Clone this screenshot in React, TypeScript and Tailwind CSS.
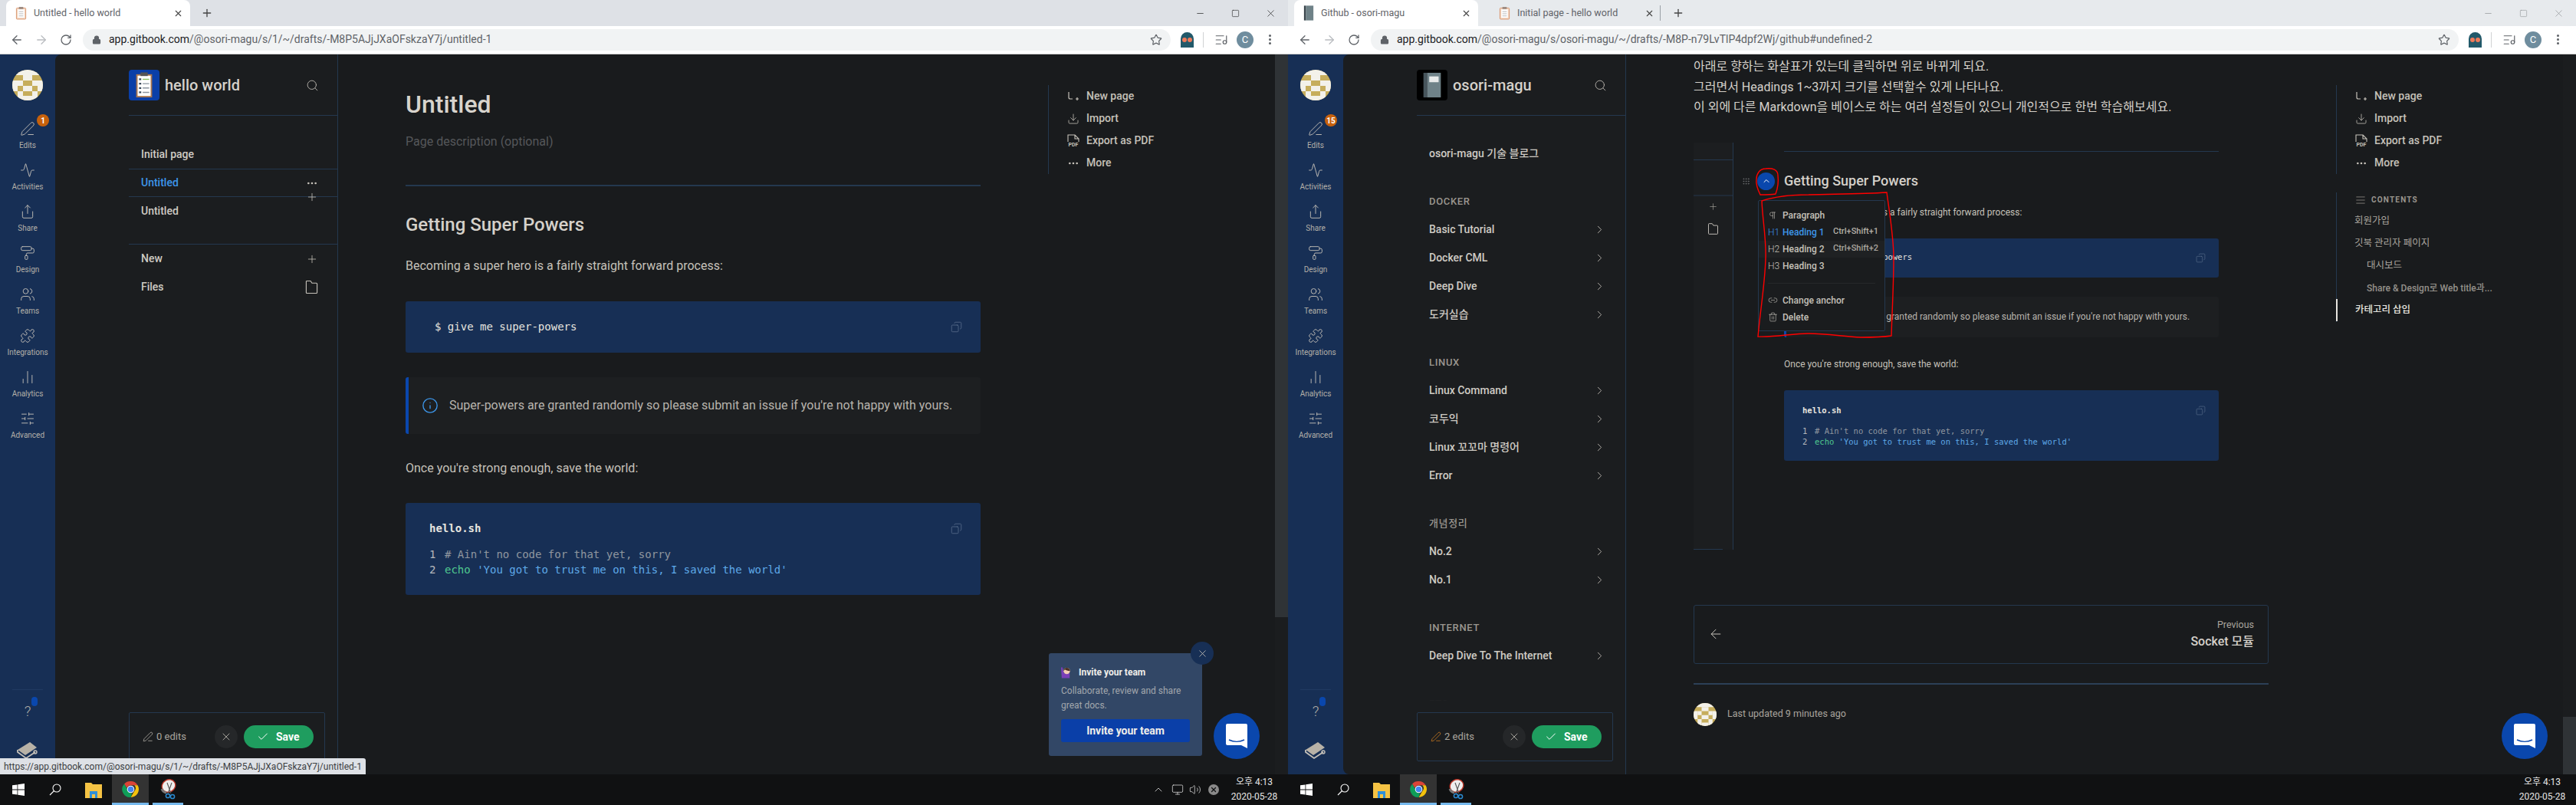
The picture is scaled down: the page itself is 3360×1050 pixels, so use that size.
import type { ReactNode } from "react";
import {
  Activity, ArrowLeft, ArrowRight, Check, ChevronRight, ChevronUp, Copy, Download, Ellipsis, EllipsisVertical, Grip, Info,
  Link2, ListMusic, Lock, Minus, Monitor, PaintRoller, PenLine, Pilcrow, Plus, Puzzle, RotateCw, Search, Share,
  SlidersHorizontal, Square, Star, Trash2, Users, ChartNoAxesColumn, AlignJustify, Volume2, X,
} from "lucide-react";

function Identicon({ size }: { size: string }) {
  return (
    <div className={`${size} shrink-0 rounded-full overflow-hidden`}>
      <svg viewBox="0 0 40 40" className="w-full h-full block">
        <rect width="40" height="40" fill="#c6ad5c" />
        <rect width="40" height="7" fill="#f3f1ea" />
        <rect x="0" y="14" width="7" height="14" fill="#f3f1ea" />
        <rect x="33" y="14" width="7" height="14" fill="#f3f1ea" />
        <rect x="14" y="7" width="12" height="7" fill="#f3f1ea" />
        <rect x="7" y="14" width="7" height="7" fill="#f3f1ea" />
        <rect x="26" y="14" width="7" height="7" fill="#f3f1ea" />
        <rect x="14" y="21" width="12" height="7" fill="#f3f1ea" />
        <rect x="7" y="28" width="7" height="12" fill="#f3f1ea" />
        <rect x="26" y="28" width="7" height="12" fill="#f3f1ea" />
        <rect x="14" y="34" width="12" height="6" fill="#f3f1ea" />
      </svg>
    </div>
  );
}

function ClipboardFavicon() {
  return (
    <svg viewBox="0 0 16 18" className="w-[15px] h-[18px] shrink-0">
      <rect x="1.5" y="2" width="13" height="15.5" rx="1" fill="#f3d9c5" stroke="#d9946c" />
      <rect x="3.5" y="4" width="9" height="11.5" fill="#fff" />
      <rect x="5" y="0.5" width="6" height="3" fill="#9c8a80" />
      <path d="M5 7h6M5 10h6M5 13h6" stroke="#b5b5b5" />
    </svg>
  );
}

function HelloLogo() {
  return (
    <div className="w-10 h-10 shrink-0 rounded-sm bg-[#0a3fa8] flex items-center justify-center">
      <svg viewBox="0 0 24 36" className="w-[24px] h-[34px]">
        <rect x="1" y="3" width="22" height="32" fill="#a8764f" />
        <rect x="3" y="5" width="18" height="28" fill="#fff" />
        <rect x="7" y="0.5" width="10" height="5" fill="#555" />
        <path d="M5 10h3M5 16h3M5 22h3M5 28h3" stroke="#3a4a5c" strokeWidth="2.4" />
        <path d="M10 10h9" stroke="#8cc060" strokeWidth="1.5" />
        <path d="M10 16h9M10 22h9M10 28h9" stroke="#8a949e" strokeWidth="1.5" />
      </svg>
    </div>
  );
}

function BookLogo() {
  return (
    <div className="w-10 h-10 shrink-0 rounded-sm bg-black flex items-center justify-center">
      <svg viewBox="0 0 24 36" className="w-[24px] h-[34px]">
        <rect x="0" y="1" width="5" height="34" fill="#47555c" />
        <rect x="5" y="1" width="19" height="34" fill="#6f8288" />
        <rect x="8" y="6" width="13" height="8" fill="#e8eaea" />
      </svg>
    </div>
  );
}

function PageBookIcon() {
  return (
    <svg viewBox="0 0 16 22" className="w-[14px] h-[20px] shrink-0">
      <rect x="1" y="0" width="3" height="22" fill="#39454c" />
      <rect x="4" y="0" width="11" height="22" fill="#6f8288" />
    </svg>
  );
}

function FolderOutline() {
  return (
    <svg viewBox="0 0 18 20" fill="none" stroke="#c5c1b9" strokeWidth="1.2" className="w-[17px] h-[19px]">
      <path d="M1.5 2.5a1 1 0 0 1 1-1h5l2 3h6a1 1 0 0 1 1 1v12a1 1 0 0 1-1 1h-13a1 1 0 0 1-1-1z" />
    </svg>
  );
}

function TabStrip({ second, unfocused }: { second?: boolean; unfocused?: boolean }) {
  return (
    <div className={`h-[34px] flex items-end pl-2 text-[12.5px] ${unfocused ? "bg-[#e7eaed]" : "bg-[#dee1e6]"}`}>
      <div className="w-[240px] h-[34px] bg-white rounded-t-lg flex items-center pl-3 text-[#5f6368] shrink-0">
        {second ? <PageBookIcon /> : <ClipboardFavicon />}
        <span className="ml-[9px] flex-1">{second ? "Github - osori-magu" : "Untitled - hello world"}</span>
        <X size={13} strokeWidth={2} className="mr-[9px] text-[#444]" />
      </div>
      {second && (
        <div className="w-[238px] h-[34px] flex items-center pl-[27px] text-[#5f6368] shrink-0">
          <ClipboardFavicon />
          <span className="ml-[9px] flex-1">Initial page - hello world</span>
          <X size={13} strokeWidth={2} className="mr-[7px] text-[#444]" />
          <div className="w-px h-[20px] bg-[#9aa0a6]" />
        </div>
      )}
      <div className={`h-[34px] flex items-center ${second ? "ml-[15px]" : "ml-[14px]"}`}>
        <Plus size={16} strokeWidth={2} className="text-[#444]" />
      </div>
      <div className="flex-1" />
      <div className={`h-[34px] flex items-center ${unfocused ? "text-[#8a8d90]" : "text-[#111]"}`}>
        <div className="w-[46px] flex justify-center"><Minus size={13} strokeWidth={1.2} /></div>
        <div className="w-[46px] flex justify-center"><Square size={11} strokeWidth={1.2} /></div>
        <div className="w-[46px] flex justify-center"><X size={15} strokeWidth={1} /></div>
      </div>
    </div>
  );
}

function ToolBar({ url }: { url: string }) {
  return (
    <div className="h-[37px] bg-white border-b border-[#d0d0d0] flex items-center pl-[6px] pb-px">
      <div className="w-8 flex justify-center"><ArrowLeft size={18} strokeWidth={1.7} className="text-[#5f6368]" /></div>
      <div className="w-8 flex justify-center"><ArrowRight size={18} strokeWidth={1.7} className="text-[#b9bcc0]" /></div>
      <div className="w-8 flex justify-center"><RotateCw size={16} strokeWidth={1.9} className="text-[#5f6368]" /></div>
      <div className="ml-[6px] w-[1419px] h-[28px] rounded-full bg-[#f1f3f4] flex items-center pl-[12px] text-[14px] text-[#202124]">
        <Lock size={12} strokeWidth={2.4} className="text-[#5f6368] fill-[#5f6368]" />
        <span className="ml-[10px] flex-1 text-[#5f6368]">
          <span className="text-[#202124]">app.gitbook.com</span>
          {url}
        </span>
        <Star size={16} strokeWidth={1.8} className="mr-[11px] text-[#5f6368]" />
      </div>
      <div className="ml-[13px] w-[17px] h-[20px] rounded-t-full bg-[#22596a] flex items-center justify-center gap-px">
        <div className="w-[6px] h-[6px] rounded-full bg-[#ee7a5a]" />
        <div className="w-[6px] h-[6px] rounded-full bg-[#ee7a5a]" />
      </div>
      <div className="ml-[12px] w-px h-[20px] bg-[#d0d2d4]" />
      <ListMusic size={18} strokeWidth={1.6} className="ml-[14px] text-[#5f6368]" />
      <div className="ml-[11px] w-[22px] h-[22px] rounded-full bg-[#6f8d9e] flex items-center justify-center text-white text-[13px]">C</div>
      <EllipsisVertical size={17} strokeWidth={2.4} className="ml-[13px] text-[#5f6368]" />
    </div>
  );
}

function NavItem({ icon, label, badge }: { icon: ReactNode; label: string; badge?: string }) {
  return (
    <div className="relative h-[54px] flex flex-col items-center pt-[3px] text-[#c5c1b9]">
      <div className="h-[28px] flex items-center">{icon}</div>
      <div className="mt-[1px] text-[10px] leading-[14px] whitespace-nowrap text-[#b4b0a8]">{label}</div>
      {badge && (
        <div className="absolute left-[48px] -top-[2px] w-[16px] h-[16px] rounded-full bg-[#c7610c] text-white text-[10px] font-bold flex items-center justify-center">
          {badge}
        </div>
      )}
    </div>
  );
}

function IconRail({ badge }: { badge: string }) {
  const i = { size: 20, strokeWidth: 1.1 };
  return (
    <div className="relative w-[72px] shrink-0 bg-[#172f55] flex flex-col">
      <div className="pt-[20px] pb-[20px] pl-[16px]"><Identicon size="w-10 h-10" /></div>
      <NavItem icon={<PenLine {...i} />} label="Edits" badge={badge} />
      <NavItem icon={<Activity {...i} />} label="Activities" />
      <NavItem icon={<Share {...i} />} label="Share" />
      <NavItem icon={<PaintRoller {...i} />} label="Design" />
      <NavItem icon={<Users {...i} />} label="Teams" />
      <NavItem icon={<Puzzle {...i} />} label="Integrations" />
      <NavItem icon={<ChartNoAxesColumn {...i} />} label="Analytics" />
      <NavItem icon={<SlidersHorizontal {...i} />} label="Advanced" />
      <div className="mt-auto mx-4 border-t border-[#203a61]" />
      <div className="relative mt-[8px] h-[50px] flex items-center justify-center text-[#b4b0a8] text-[19px] font-light pb-[10px]">
        ?
        <div className="absolute left-[41px] top-[1px] w-[8px] h-[12px] rounded-full bg-[#0a47ad]" />
      </div>
      <div className="h-[52px] flex justify-center pt-[4px]">
        <svg viewBox="0 0 32 32" className="w-[32px] h-[32px]">
          <path d="M3 16 19 6l9 7-15 10z" fill="#b8b2a7" />
          <path d="M3 16v3l11 8 12-8" fill="none" stroke="#c5c1b9" strokeWidth="1.8" />
          <circle cx="26" cy="19" r="2" fill="none" stroke="#c5c1b9" strokeWidth="1.4" />
        </svg>
      </div>
    </div>
  );
}

function SaveBox({ edits, active }: { edits: string; active?: boolean }) {
  return (
    <div className="absolute left-[96px] bottom-[17px] w-[256px] h-[64px] bg-[#1b1d1f] border border-[#24384f] rounded-[2px] flex items-center pl-[17px]">
      <PenLine size={14} strokeWidth={1.2} className={active ? "text-[#e2861f]" : "text-[#c5c1b9]"} />
      <span className="ml-[4px] w-[76px] text-[13px] text-[#a9a59e]">{edits}</span>
      <div className="w-[30px] h-[30px] rounded-full bg-[#252729] flex items-center justify-center">
        <X size={16} strokeWidth={1.2} className="text-[#c5c1b9]" />
      </div>
      <div className="ml-[8px] w-[91px] h-[30px] rounded-full bg-[#1f9d5f] flex items-center pl-[17px] text-white text-[14px] font-bold">
        <Check size={16} strokeWidth={1.5} />
        <span className="ml-[9px]">Save</span>
      </div>
    </div>
  );
}

function Row({ children, icon }: { children: ReactNode; icon?: ReactNode }) {
  return (
    <div className="h-[37px] flex items-center justify-between pl-[16px] pr-[25px] text-[14px] font-medium text-[#cfcbc4]">
      <span>{children}</span>
      {icon}
    </div>
  );
}

function SectionTitle({ children }: { children: ReactNode }) {
  return (
    <div className="mt-[25px] h-[37px] flex items-center pl-[16px] text-[13px] font-medium tracking-[0.05em] text-[#9a968f]">
      {children}
    </div>
  );
}

function Chevron() {
  return <ChevronRight size={17} strokeWidth={1.2} className="text-[#c5c1b9]" />;
}

function SpaceHeader({ logo, title }: { logo: ReactNode; title: string }) {
  return (
    <div className="h-[80px] border-b border-[#24384f] flex items-start pt-[20px]">
      {logo}
      <div className="ml-[7px] h-10 flex-1 flex items-center text-[20px] font-medium text-[#d5d1ca]">{title}</div>
      <div className="h-10 flex items-center pr-[24px]"><Search size={17} strokeWidth={1.2} className="text-[#c5c1b9]" /></div>
    </div>
  );
}

function HelloSidebar() {
  return (
    <div className="relative w-[369px] shrink-0 bg-[#1b1d1f] rounded-l-lg border-r border-[#24384f] pl-[96px]">
      <SpaceHeader logo={<HelloLogo />} title="hello world" />
      <div className="pt-[32px]">
        <Row>Initial page</Row>
        <div className="relative h-[37px] border-y border-[#24384f] flex items-center justify-between pl-[16px] pr-[25px] text-[14px] font-medium text-[#3d96ea]">
          <span>Untitled</span>
          <Ellipsis size={16} strokeWidth={2} className="text-[#c5c1b9]" />
          <Plus size={16} strokeWidth={1.2} className="absolute right-[25px] -bottom-[9px] text-[#c5c1b9]" />
        </div>
        <Row>Untitled</Row>
        <div className="mt-[24px] mb-0 border-t border-[#24384f]" />
        <Row icon={<Plus size={16} strokeWidth={1.2} className="text-[#c5c1b9]" />}>New</Row>
        <Row icon={<FolderOutline />}>Files</Row>
      </div>
      <SaveBox edits="0 edits" />
    </div>
  );
}

function OsoriSidebar() {
  const pages: [string, string[]][] = [
    ["DOCKER", ["Basic Tutorial", "Docker CML", "Deep Dive", "도커실습"]],
    ["LINUX", ["Linux Command", "코두익", "Linux 꼬꼬마 명령어", "Error"]],
    ["개념정리", ["No.2", "No.1"]],
    ["INTERNET", ["Deep Dive To The Internet"]],
  ];
  return (
    <div className="relative w-[369px] shrink-0 bg-[#1b1d1f] rounded-l-lg border-r border-[#24384f] pl-[96px] overflow-hidden">
      <SpaceHeader logo={<BookLogo />} title="osori-magu" />
      <div className="pt-[31px]">
        <Row>osori-magu 기술 블로그</Row>
        {pages.map(([title, rows]) => (
          <div key={title}>
            <SectionTitle>{title}</SectionTitle>
            {rows.map((r) => (
              <Row key={r} icon={<Chevron />}>{r}</Row>
            ))}
          </div>
        ))}
        <SectionTitle>ETC</SectionTitle>
      </div>
      <div className="absolute left-[96px] bottom-[96px] w-[256px] h-[14px] bg-gradient-to-b from-transparent to-[#1b1d1f]" />
      <div className="absolute left-[96px] bottom-0 w-[256px] h-[96px] bg-[#1b1d1f]" />
      <SaveBox edits="2 edits" active />
    </div>
  );
}

function CodeLines({ small }: { small?: boolean }) {
  return (
    <div className={small ? "mt-[12px] text-[10.5px] leading-[14.5px]" : "mt-[14px] text-[14px] leading-[20px]"}>
      <div className="flex text-[#8f969f]">
        <span className={small ? "w-[16px] text-[#b5b8bc]" : "w-[20px] text-[#b5b8bc]"}>1</span>
        <span># Ain't no code for that yet, sorry</span>
      </div>
      <div className="flex">
        <span className={small ? "w-[16px] text-[#b5b8bc]" : "w-[20px] text-[#b5b8bc]"}>2</span>
        <span className="text-[#4fc88f]">echo</span>
        <span className="text-[#5ea9e8] whitespace-pre"> 'You got to trust me on this, I saved the world'</span>
      </div>
    </div>
  );
}

function ActionRow({ icon, label }: { icon: ReactNode; label: string }) {
  return (
    <div className="h-[29px] flex items-center text-[14px] font-medium text-[#c5c1b9]">
      <div className="w-[49px] pl-[24px]">{icon}</div>
      {label}
    </div>
  );
}

function PageActions() {
  return (
    <div className="border-l border-[#24384f] h-[116px]">
      <ActionRow
        label="New page"
        icon={
          <svg viewBox="0 0 16 16" fill="none" stroke="#c5c1b9" strokeWidth="1.2" className="w-[16px] h-[16px]">
            <path d="M2 2v7a2 2 0 0 0 2 2h3M11 11h4M13 9v4" />
          </svg>
        }
      />
      <ActionRow label="Import" icon={<Download size={16} strokeWidth={1.2} />} />
      <ActionRow
        label="Export as PDF"
        icon={
          <div className="w-[16px] flex flex-col items-center">
            <svg viewBox="0 0 16 10" fill="none" stroke="#c5c1b9" strokeWidth="1.1" className="w-[16px] h-[10px]">
              <path d="M1 10V1h9l5 5v4M10 1v5h5" />
            </svg>
            <span className="text-[7px] leading-[8px] font-bold">PDF</span>
          </div>
        }
      />
      <ActionRow label="More" icon={<Ellipsis size={16} strokeWidth={2} />} />
    </div>
  );
}

function ScrollBar({ thumb }: { thumb: string }) {
  return (
    <div className="w-[17px] shrink-0 bg-[#1b1d1f] flex flex-col">
      <div className={thumb} />
    </div>
  );
}

function HelloMain() {
  return (
    <div className="flex-1 flex pl-[88px]">
      <div className="w-[750px]">
        <div className="mt-[45px] h-10 text-[32px] leading-[40px] font-medium text-[#d8d4cd]">Untitled</div>
        <div className="mt-[17px] h-6 text-[16px] leading-[24px] text-[#55575a]">Page description (optional)</div>
        <div className="mt-[44px] h-[2px] bg-[#24384f]" />
        <div className="mt-[34px] h-8 text-[24px] leading-[32px] font-medium text-[#d5d1ca]">Getting Super Powers</div>
        <div className="mt-[26px] h-6 text-[16px] leading-[24px] text-[#c5c1b9]">Becoming a super hero is a fairly straight forward process:</div>
        <div className="mt-[34px] h-[67px] bg-[#172f55] rounded-[3px] flex items-center justify-between pl-[38px] pr-[24px] font-['DejaVu_Sans_Mono',monospace] text-[14px] text-[#e6e4df]">
          <span>$ give me super-powers</span>
          <Copy size={15} strokeWidth={1.2} className="text-[#5f7390] -scale-x-100" />
        </div>
        <div className="mt-[32px] h-[74px] bg-[#1d1f21] rounded-[3px] border-l-4 border-[#0a47ad] flex items-center pl-[17px] text-[16px] text-[#b8b4ad]">
          <Info size={22} strokeWidth={1.5} className="text-[#3d96ea]" />
          <span className="ml-[14px]">Super-powers are granted randomly so please submit an issue if you're not happy with yours.</span>
        </div>
        <div className="mt-[33px] h-6 text-[16px] leading-[24px] text-[#c5c1b9]">Once you're strong enough, save the world:</div>
        <div className="relative mt-[33px] h-[120px] bg-[#172f55] rounded-[3px] pt-[23px] pl-[31px] font-['DejaVu_Sans_Mono',monospace]">
          <div className="text-[14px] leading-[20px] font-bold text-[#e6e4df]">hello.sh</div>
          <CodeLines />
          <Copy size={15} strokeWidth={1.2} className="absolute right-[24px] top-[26px] text-[#5f7390] -scale-x-100" />
        </div>
      </div>
      <div className="ml-[88px] mt-[40px] flex-1"><PageActions /></div>
    </div>
  );
}

function PopupItem({ icon, label, keys, blue, hover }: { icon: ReactNode; label: string; keys?: string; blue?: boolean; hover?: boolean }) {
  return (
    <div className={`h-[22px] flex items-center pl-[12px] whitespace-nowrap text-[12px] font-medium ${hover ? "bg-[#1f2123]" : ""} ${blue ? "text-[#3d96ea]" : "text-[#c5c1b9]"}`}>
      <div className="w-[19px] text-[12px] font-light">{icon}</div>
      <span className="w-[66px]">{label}</span>
      <span className={`text-[11px] ${blue ? "text-[#b4b0a8]" : "text-[#a9a59e]"}`}>{keys}</span>
    </div>
  );
}

function EmbeddedShot() {
  return (
    <div className="relative mt-[32px] h-[531px] flex">
      <div className="w-[52px] bg-[#1c1e20] border-r border-[#24384f] relative">
        <div className="mt-[22px] border-t border-[#24384f]" />
        <div className="mt-[45px] border-t-2 border-[#202a36]" />
        <div className="mt-[7px] flex justify-center"><Plus size={13} strokeWidth={1.2} className="text-[#a9a59e]" /></div>
        <div className="mt-[13px] flex justify-center scale-[0.85]"><FolderOutline /></div>
        <div className="absolute left-0 bottom-0 w-[38px] border-b border-[#24384f]" />
      </div>
      <div className="w-[567px] ml-[66px]">
        <div className="mt-[11px] h-px bg-[#24384f]" />
        <div className="mt-[26px] h-6 text-[18px] leading-[24px] font-medium text-[#d5d1ca]">Getting Super Powers</div>
        <div className="mt-[19px] h-5 text-[12px] leading-[20px] text-[#c5c1b9]">Becoming a super hero is a fairly straight forward process:</div>
        <div className="mt-[24px] h-[51px] bg-[#172f55] rounded-[3px] flex items-center justify-between pl-[28px] pr-[17px] font-['DejaVu_Sans_Mono',monospace] text-[10.5px] text-[#e6e4df]">
          <span>$ give me super-powers</span>
          <Copy size={13} strokeWidth={1.1} className="text-[#5f7390] -scale-x-100" />
        </div>
        <div className="mt-[25px] h-[53px] bg-[#1d1f21] rounded-[3px] border-l-[3px] border-[#0a47ad] flex items-center pl-[34px] text-[12px] text-[#b8b4ad]">
          Super-powers are granted randomly so please submit an issue if you're not happy with yours.
        </div>
        <div className="mt-[25px] h-5 text-[12px] leading-[20px] text-[#c5c1b9]">Once you're strong enough, save the world:</div>
        <div className="mt-[24px] h-[92px] bg-[#172f55] rounded-[3px] pt-[18px] pl-[24px] font-['DejaVu_Sans_Mono',monospace] relative">
          <div className="text-[10.5px] leading-[16px] font-bold text-[#e6e4df]">hello.sh</div>
          <CodeLines small />
          <Copy size={13} strokeWidth={1.1} className="absolute right-[17px] top-[20px] text-[#5f7390] -scale-x-100" />
        </div>
      </div>

      <Grip size={11} strokeWidth={1.5} className="absolute left-[63px] top-[45px] text-[#77797c]" />
      <div className="absolute left-[83px] top-[39px] w-[23px] h-[23px] rounded-full bg-[#0a47ad] flex items-center justify-center">
        <ChevronUp size={12} strokeWidth={2} className="text-white" />
      </div>

      <div className="absolute left-[84px] top-[75px] w-[166px] h-[171px] bg-[#1a1c1e] border border-[#24384f] rounded-[2px] pt-[8px]">
        <PopupItem icon={<Pilcrow size={12} strokeWidth={1.2} />} label="Paragraph" />
        <PopupItem icon="H1" label="Heading 1" keys="Ctrl+Shift+1" blue />
        <PopupItem icon="H2" label="Heading 2" keys="Ctrl+Shift+2" hover />
        <PopupItem icon="H3" label="Heading 3" />
        <div className="mt-[11px] mb-[11px] mx-[12px] border-t border-[#25272a]" />
        <PopupItem icon={<Link2 size={13} strokeWidth={1.2} />} label="Change anchor" />
        <PopupItem icon={<Trash2 size={13} strokeWidth={1.2} />} label="Delete" />
      </div>

      <svg viewBox="0 0 300 270" fill="none" stroke="#ff0000" strokeWidth="1.4" className="absolute left-0 top-0 w-[300px] h-[270px] pointer-events-none">
        <path d="M94 34c9-1 16 1 16 9 1 8 0 16-3 24-6 1-14 1-20 1-3-6-6-13-5-20 0-7 4-14 12-14z" />
        <path d="M89 76c18-6 40-8 61-8 34-1 70-1 102-3 4 30 9 58 9 86 0 34-2 68-3 101-14 2-26 2-40 2-22-1-44-5-68-5-22 0-43 5-66 4 3-34 9-68 10-102 1-25-4-50-5-75z" />
      </svg>
    </div>
  );
}

function OsoriMain() {
  return (
    <div className="flex-1 flex pl-[88px]">
      <div className="w-[750px]">
        <div className="pt-[3px] text-[16px] leading-[26.5px] text-[#d5d1ca]">
          <div>아래로 향하는 화살표가 있는데 클릭하면 위로 바뀌게 되요.</div>
          <div>그러면서 Headings 1~3까지 크기를 선택할수 있게 나타나요.</div>
          <div>이 외에 다른 Markdown을 베이스로 하는 여러 설정들이 있으니 개인적으로 한번 학습해보세요.</div>
        </div>
        <EmbeddedShot />
        <div className="mt-[72px] h-[77px] border border-[#24384f] rounded-[3px] flex items-center justify-between pl-[18px] pr-[18px]">
          <ArrowLeft size={20} strokeWidth={1.2} className="text-[#c5c1b9]" />
          <div className="text-right">
            <div className="text-[12.5px] leading-[20px] text-[#a9a59e]">Previous</div>
            <div className="text-[16px] leading-[24px] font-medium text-[#d5d1ca]">Socket 모듈</div>
          </div>
        </div>
        <div className="mt-[25px] h-[2px] bg-[#2c4057]" />
        <div className="mt-[24px] flex items-center">
          <Identicon size="w-[30px] h-[30px]" />
          <span className="ml-[14px] text-[12.5px] text-[#a9a59e]">Last updated 9 minutes ago</span>
        </div>
      </div>
      <div className="ml-[88px] mt-[40px] flex-1">
        <PageActions />
        <div className="mt-[24px] relative border-l border-[#24384f] h-[169px] text-[14px] text-[#a9a59e]">
          <div className="h-[19px] flex items-center pl-[24px] text-[10px] font-bold tracking-[0.12em] text-[#99958e]">
            <AlignJustify size={14} strokeWidth={1.3} className="mr-[7px]" />
            CONTENTS
          </div>
          <div className="h-[29px] mt-[4px] flex items-center pl-[23px] text-[12.5px]">회원가입</div>
          <div className="h-[29px] flex items-center pl-[23px] text-[12.5px]">깃북 관리자 페이지</div>
          <div className="h-[29px] flex items-center pl-[39px] text-[12.5px]">대시보드</div>
          <div className="h-[29px] flex items-center pl-[39px] text-[12px] font-medium text-[#94908a]">Share &amp; Design로 Web title과...</div>
          <div className="h-[29px] flex items-center pl-[23px] text-[12.5px] font-medium text-[#e6e4df] border-l-[2px] -ml-px border-[#e6e4df]">카테고리 삽입</div>
        </div>
      </div>
    </div>
  );
}

function ChatBubble() {
  return (
    <div className="absolute left-[1583px] top-[859px] w-[60px] h-[60px] rounded-full bg-[#0a47ad] flex items-center justify-center">
      <svg viewBox="0 0 28 32" className="w-[28px] h-[32px]">
        <path d="M2 0h24a2 2 0 0 1 2 2v30l-8-4H2a2 2 0 0 1-2-2V2a2 2 0 0 1 2-2z" fill="#fff" />
        <path d="M4 21c6 3 14 3 20 0" fill="none" stroke="#0a47ad" strokeWidth="1.6" />
      </svg>
    </div>
  );
}

function InviteCard() {
  return (
    <div className="absolute left-[1368px] top-[781px] w-[200px] h-[134px] bg-[#324766] rounded-[3px] px-[16px] pt-[15px]">
      <div className="flex items-center h-[20px]">
        <svg viewBox="0 0 16 16" className="w-[15px] h-[16px] -ml-[1px]">
          <path d="M1 1h2l2 8h8v7H2z" fill="#7a3fb8" />
          <circle cx="9" cy="6" r="4.5" fill="#f3cdb5" />
          <path d="M4.5 6a4.5 4.5 0 0 1 9 0c-3 0-6-1-7-2z" fill="#4a3226" />
        </svg>
        <span className="ml-[9px] text-[12px] font-bold text-[#f0eeea]">Invite your team</span>
      </div>
      <div className="mt-[5px] text-[12px] leading-[19px] text-[#a3a7ad]">Collaborate, review and share great docs.</div>
      <div className="mt-[8px] h-[30px] rounded-[3px] bg-[#0a3fa8] flex items-center justify-center text-[14px] font-bold text-[#f0eeea]">
        Invite your team
      </div>
      <div className="absolute -right-[15px] -top-[15px] w-[30px] h-[30px] rounded-full bg-[#172f55] flex items-center justify-center">
        <X size={15} strokeWidth={1.3} className="text-[#c5c1b9]" />
      </div>
    </div>
  );
}

function TaskBar({ tray }: { tray?: boolean }) {
  return (
    <div className="h-[40px] bg-[#101112] flex text-white shrink-0">
      <div className="w-[48px] flex items-center justify-center">
        <svg viewBox="0 0 16 16" className="w-[16px] h-[16px]" fill="#fff">
          <path d="M0 2.3 6.5 1.4v6.2H0zM7.3 1.3 16 0v7.6H7.3zM0 8.4h6.5v6.2L0 13.7zM7.3 8.4H16V16l-8.7-1.3z" />
        </svg>
      </div>
      <div className="w-[48px] flex items-center justify-center">
        <svg viewBox="0 0 16 16" fill="none" stroke="#fff" strokeWidth="1.1" className="w-[16px] h-[16px]">
          <circle cx="10" cy="6" r="5" />
          <path d="M6.5 9.5 1 15" />
        </svg>
      </div>
      <div className="ml-[2px] w-[48px] flex items-center justify-center">
        <svg viewBox="0 0 22 22" className="w-[22px] h-[22px]">
          <path d="M0 2h8l2 2h12v18H0z" fill="#f5c344" />
          <rect x="6" y="13" width="10" height="9" fill="#2f8fd8" />
          <rect x="9" y="17" width="4" height="5" fill="#f5c344" />
        </svg>
      </div>
      <div className="w-[48px] bg-[#333333] border-b-[3px] border-[#76b9ed] flex items-center justify-center">
        <svg viewBox="0 0 24 24" className="w-[23px] h-[23px] mt-[2px]">
          <path d="M12 1a11 11 0 0 1 9.5 5.5H12a5.5 5.5 0 0 0-5.2 3.7L3.2 4.6A11 11 0 0 1 12 1z" fill="#db4437" />
          <path d="M21.5 6.5A11 11 0 0 1 12 23l4.8-8.2a5.5 5.5 0 0 0 .2-8.3z" fill="#f4c20d" />
          <path d="M12 23A11 11 0 0 1 3.2 4.6l4.7 8.2a5.5 5.5 0 0 0 5.9 4.4z" fill="#0f9d58" />
          <circle cx="12" cy="12" r="5" fill="#fff" />
          <circle cx="12" cy="12" r="4" fill="#4285f4" />
        </svg>
      </div>
      <div className="ml-[5px] w-[40px] border-b-[3px] border-[#76b9ed] flex items-center justify-center">
        <svg viewBox="0 0 26 28" className="w-[26px] h-[28px]">
          <ellipse cx="14" cy="10" rx="9" ry="8" transform="rotate(-30 14 10)" fill="#eee" stroke="#c0392b" strokeWidth="1.4" />
          <path d="M5 14a8 8 0 0 0 6 5" stroke="#777" strokeWidth="3" fill="none" />
          <path d="M12 6l5 14M18 6l-5 14" stroke="#555" strokeWidth="1.1" />
          <circle cx="13" cy="23" r="2.6" fill="none" stroke="#2b8ad0" strokeWidth="1.5" />
          <circle cx="19" cy="24" r="2.6" fill="none" stroke="#2b8ad0" strokeWidth="1.5" />
        </svg>
      </div>
      <div className="flex-1" />
      {tray && (
        <div className="flex items-center text-[#e6e6e6]">
          <ChevronUp size={16} strokeWidth={1.2} />
          <Monitor size={16} strokeWidth={1.1} className="ml-[9px]" />
          <Volume2 size={16} strokeWidth={1.1} className="ml-[7px]" />
          <div className="ml-[9px] w-[14px] h-[14px] rounded-full bg-[#8a8a8a] flex items-center justify-center">
            <X size={10} strokeWidth={3} className="text-[#101112]" />
          </div>
        </div>
      )}
      <div className="w-[78px] ml-[7px] mr-[5px] flex flex-col items-center justify-center text-[12px] leading-[19px] text-[#e6e6e6]">
        <div>오후 4:13</div>
        <div>2020-05-28</div>
      </div>
    </div>
  );
}

export default function App() {
  return (
    <div className="w-[3360px] h-[1050px] flex overflow-hidden font-['Roboto','Noto_Sans_CJK_KR',sans-serif] bg-[#191b1d]">
      <div className="relative w-[1680px] h-full flex flex-col">
        <TabStrip />
        <ToolBar url="/@osori-magu/s/1/~/drafts/-M8P5AJjJXaOFskzaY7j/untitled-1" />
        <div className="relative h-[939px] flex bg-[#172f55] overflow-hidden">
          <IconRail badge="1" />
          <HelloSidebar />
          <div className="flex-1 flex bg-[#191b1d]">
            <HelloMain />
            <ScrollBar thumb="h-[734px] bg-[#2f3336]" />
          </div>
          <InviteCard />
          <ChatBubble />
          <div className="absolute left-0 bottom-0 w-[477px] h-[21px] bg-[#dee1e6] rounded-tr-[3px] flex items-center pl-[5px] whitespace-nowrap text-[12px] text-[#3c4043]">
            https://app.gitbook.com/@osori-magu/s/1/~/drafts/-M8P5AJjJXaOFskzaY7j/untitled-1
          </div>
        </div>
        <TaskBar tray />
      </div>
      <div className="relative w-[1680px] h-full flex flex-col">
        <TabStrip second unfocused />
        <ToolBar url="/@osori-magu/s/osori-magu/~/drafts/-M8P-n79LvTlP4dpf2Wj/github#undefined-2" />
        <div className="relative h-[939px] flex bg-[#172f55] overflow-hidden">
          <IconRail badge="15" />
          <OsoriSidebar />
          <div className="flex-1 flex bg-[#191b1d]">
            <OsoriMain />
            <ScrollBar thumb="mt-auto h-[75px] bg-[#2f3336]" />
          </div>
          <ChatBubble />
        </div>
        <TaskBar />
      </div>
    </div>
  );
}
